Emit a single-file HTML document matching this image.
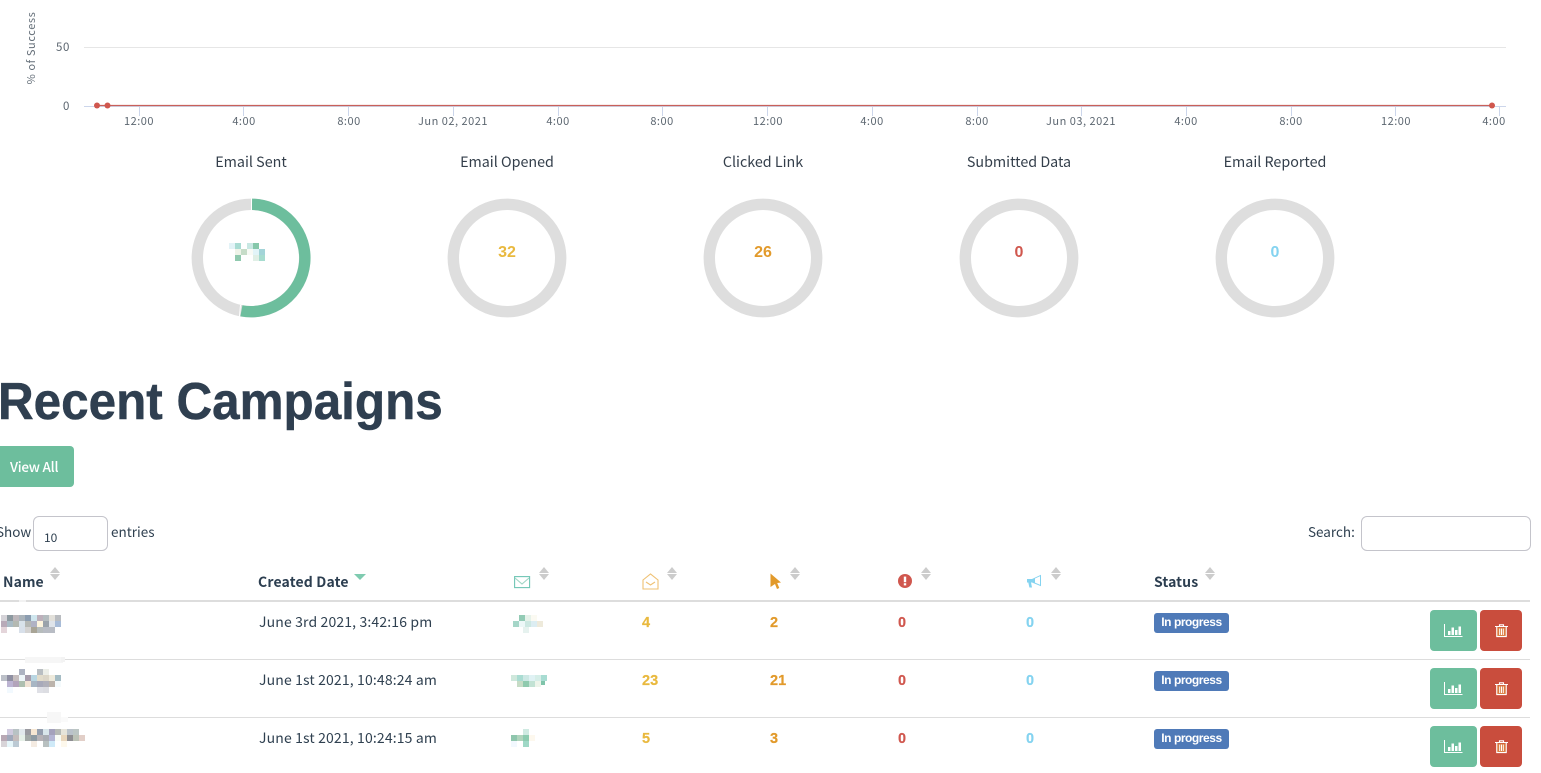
<!DOCTYPE html>
<html><head><meta charset="utf-8"><title>Dashboard</title>
<style>
html,body{margin:0;padding:0;background:#fff}
body{width:1541px;height:773px;position:relative;overflow:hidden;font-family:"Noto Sans CJK SC","Liberation Sans",sans-serif;color:#2c3e50}
.a{position:absolute;white-space:nowrap;line-height:20px}
.t{font-size:14px;letter-spacing:.14px;color:#2f4050}
.l{font-size:13.5px;letter-spacing:0;color:#2f4050}
.h{font-size:14px;font-weight:700;letter-spacing:.1px;color:#2c3e50}
.n{font-family:"Liberation Sans",sans-serif;font-weight:700;font-size:14.5px;margin-top:1px;-webkit-text-stroke:.2px currentColor}
.title{font-size:14.3px;color:#333e4a;text-align:center;width:200px}
.ctr{font-family:"Liberation Sans",sans-serif;font-weight:700;font-size:16px;text-align:center;width:60px}
.ax{font-size:11px;letter-spacing:.5px;color:#5c6670;text-align:center;width:90px;line-height:14px}
.badge{position:absolute;left:1154px;width:75px;height:20px;background:#4f7ab8;border-radius:3px;color:#fff;font:700 12px/18px "Liberation Sans",sans-serif;letter-spacing:-.45px;text-align:center}
.bg{position:absolute;left:1430px;width:47px;height:41px;background:#6dbe9d;border-radius:4px}
.br{position:absolute;left:1480px;width:42px;height:41px;background:#c94d3d;border-radius:4px}
.line{position:absolute;left:0;width:1530px;height:1px;background:#ddd}
svg{position:absolute;overflow:visible}
.s{position:absolute;width:11px;height:14px}
.s:before,.s:after{content:"";position:absolute;left:0;border-left:5.5px solid transparent;border-right:5.5px solid transparent}
.s:before{top:0;border-bottom:6px solid #ccc}
.s:after{top:7px;border-top:6px solid #ccc}
.box{position:absolute;box-sizing:border-box;border:1px solid #c4c4cb;border-radius:6px;background:#fff}
</style></head><body>

<svg style="left:0;top:0" width="1541" height="130">
<line x1="84" x2="1506" y1="47.5" y2="47.5" stroke="#e6e6e6"/>
<line x1="84" x2="1506" y1="106.5" y2="106.5" stroke="#ccd6eb"/>
<g stroke="#ccd6eb">
<path d="M139.5 106v10M243.5 106v10M348.5 106v10M453.5 106v10M558.5 106v10M662.5 106v10M767.5 106v10M872.5 106v10M977.5 106v10M1081.5 106v10M1186.5 106v10M1291.5 106v10M1395.5 106v10M1499.5 106v10"/>
</g>
<line x1="97" x2="1492" y1="105.5" y2="105.5" stroke="#c9605a" stroke-width="1.3"/>
<circle cx="97" cy="105.5" r="3" fill="#d0574e"/><circle cx="107.5" cy="105.5" r="3" fill="#d0574e"/><circle cx="1492" cy="105.5" r="3" fill="#d0574e"/>
</svg>
<div class="a" style="left:31px;top:48px;font-size:11px;letter-spacing:.6px;color:#66707a;line-height:14px;transform:translate(-50%,-50%) rotate(-90deg)">% of Success</div>
<div class="a" style="left:40px;top:40px;width:30px;text-align:right;font-size:11.5px;letter-spacing:.6px;color:#5c6670;line-height:14px">50</div>
<div class="a" style="left:40px;top:99px;width:30px;text-align:right;font-size:11.5px;letter-spacing:.6px;color:#5c6670;line-height:14px">0</div>
<div class="a ax" style="left:94px;top:114px">12:00</div>
<div class="a ax" style="left:199px;top:114px">4:00</div>
<div class="a ax" style="left:304px;top:114px">8:00</div>
<div class="a ax" style="left:408px;top:114px">Jun 02, 2021</div>
<div class="a ax" style="left:513px;top:114px">4:00</div>
<div class="a ax" style="left:617px;top:114px">8:00</div>
<div class="a ax" style="left:723px;top:114px">12:00</div>
<div class="a ax" style="left:827px;top:114px">4:00</div>
<div class="a ax" style="left:932px;top:114px">8:00</div>
<div class="a ax" style="left:1036px;top:114px">Jun 03, 2021</div>
<div class="a ax" style="left:1141px;top:114px">4:00</div>
<div class="a ax" style="left:1246px;top:114px">8:00</div>
<div class="a ax" style="left:1351px;top:114px">12:00</div>
<div class="a ax" style="left:1449px;top:114px">4:00</div>

<div class="a title" style="left:151px;top:152px">Email Sent</div>
<div class="a title" style="left:407px;top:152px">Email Opened</div>
<div class="a title" style="left:663px;top:152px">Clicked Link</div>
<div class="a title" style="left:919px;top:152px">Submitted Data</div>
<div class="a title" style="left:1175px;top:152px">Email Reported</div>

<svg style="left:0;top:0" width="1541" height="340" fill="none" stroke="#dedede" stroke-width="11.4">
<circle cx="251" cy="258" r="53.7"/>
<circle cx="507" cy="258" r="53.7"/>
<circle cx="763" cy="258" r="53.7"/>
<circle cx="1019" cy="258" r="53.7"/>
<circle cx="1275" cy="258" r="53.7"/>
<path d="M252 204.300 A53.700 53.700 0 1 1 241.400 310.800" stroke="#6dbe9d"/>
<path d="M251.500 197v13M240.500 305l-1.200 13" stroke="#fff" stroke-width="1"/>
</svg>
<div class="a ctr" style="left:477px;top:243px;color:#e9b93f">32</div>
<div class="a ctr" style="left:733px;top:243px;color:#e29a2b">26</div>
<div class="a ctr" style="left:989px;top:243px;color:#d0574e">0</div>
<div class="a ctr" style="left:1245px;top:243px;color:#84d3f0">0</div>
<svg style="left:0;top:0" width="100" height="100" shape-rendering="crispEdges">
<g transform="translate(229,243)">
<rect x="0" y="0" width="6" height="6" fill="#e3f3f7"/><rect x="6" y="0" width="6" height="6" fill="#a9dcd3"/><rect x="18" y="0" width="6" height="6" fill="#c8e8e3"/><rect x="24" y="0" width="6" height="6" fill="#86c8ab"/>
<rect x="6" y="6" width="6" height="6" fill="#eef3e8"/><rect x="12" y="6" width="6" height="6" fill="#c6dcc8"/><rect x="18" y="6" width="6" height="6" fill="#f8faf5"/><rect x="24" y="6" width="6" height="6" fill="#e2f4f8"/><rect x="30" y="6" width="6" height="6" fill="#a3d4d8"/>
<rect x="6" y="12" width="6" height="6" fill="#8fc9ae"/><rect x="24" y="12" width="6" height="6" fill="#e0efe6"/><rect x="30" y="12" width="6" height="6" fill="#a6dccf"/>
</g>
</svg>

<div class="a" style="left:-2px;top:372px;font:700 52px/60px 'Liberation Sans',sans-serif;color:#2f3f50;-webkit-text-stroke:.5px #2f3f50;transform:scaleX(.95);transform-origin:0 0">Recent Campaigns</div>
<div style="position:absolute;left:-6px;top:446px;width:80px;height:41px;background:#6dbe9d;border-radius:4px"></div>
<div class="a" style="left:10px;top:456px;font-size:13.500px;letter-spacing:-.25px;font-weight:500;color:#fff">View All</div>

<div class="a l" style="left:-4px;top:521px">Show</div>
<div class="box" style="left:33px;top:516px;width:75px;height:35px"></div>
<div class="a" style="left:44px;top:528px;font-size:12px;color:#2f4050">10</div>
<div class="a l" style="left:111px;top:521px">entries</div>
<div class="a l" style="left:1308px;top:521px">Search:</div>
<div class="box" style="left:1361px;top:516px;width:170px;height:35px"></div>

<div class="a h" style="left:3px;top:572px">Name</div><div class="s" style="left:50px;top:567px"></div>
<div class="a h" style="left:258px;top:572px;letter-spacing:.16px">Created Date</div>
<div style="position:absolute;left:354px;top:574px;border-left:6px solid transparent;border-right:6px solid transparent;border-top:6px solid #7fcbb0"></div>
<svg style="left:514px;top:575px" width="16" height="14" fill="none" stroke="#6fc6b4" stroke-width="1.1"><rect x=".6" y="1.6" width="15" height="11"/><path d="M1 3l7 6 7-6" stroke="#9fd5c5"/></svg>
<div class="s" style="left:539px;top:567px"></div>
<svg style="left:642px;top:573px" width="17" height="17" fill="none" stroke="#efc173" stroke-width="1.1"><path d="M1 7L8.500 1 16 7v9H1z"/><path d="M4 9l4.500 3L13 9"/></svg>
<div class="s" style="left:667px;top:567px"></div>
<svg style="left:770px;top:573px" width="12" height="17"><path d="M.5 .5L11 9.500 7.200 10 9.300 15 7 16 5 11 .5 14z" fill="#e29a2b"/></svg>
<div class="s" style="left:790px;top:567px"></div>
<svg style="left:898px;top:574px" width="14" height="14"><circle cx="7" cy="7" r="7" fill="#d0574e"/><rect x="5.800" y="2.600" width="2.400" height="5.600" fill="#fff"/><rect x="5.800" y="9.200" width="2.400" height="2.200" fill="#fff"/></svg>
<div class="s" style="left:921px;top:567px"></div>
<svg style="left:1026px;top:574px" width="17" height="15"><path d="M1 5h5L15 .8v11.400L6 8.500H5l1 5H3.400L2.300 8.500H1z" fill="#84d3f0"/><path d="M9 4.500L14 2.300v8.400L9 8.600z" fill="#fff"/></svg>
<div class="s" style="left:1051px;top:567px"></div>
<div class="a h" style="left:1154px;top:572px">Status</div><div class="s" style="left:1205px;top:567px"></div>

<div class="line" style="top:600px;height:2px"></div>
<div class="line" style="top:659px"></div>
<div class="line" style="top:717px"></div>

<div class="a t" style="left:259px;top:612px">June 3rd 2021, 3:42:16 pm</div>
<div class="a t" style="left:259px;top:670px">June 1st 2021, 10:48:24 am</div>
<div class="a t" style="left:259px;top:728px">June 1st 2021, 10:24:15 am</div>

<div class="a n" style="left:642px;top:612px;color:#e9b93f">4</div>
<div class="a n" style="left:642px;top:670px;color:#e9b93f">23</div>
<div class="a n" style="left:642px;top:728px;color:#e9b93f">5</div>
<div class="a n" style="left:770px;top:612px;color:#e29a2b">2</div>
<div class="a n" style="left:770px;top:670px;color:#e29a2b">21</div>
<div class="a n" style="left:770px;top:728px;color:#e29a2b">3</div>
<div class="a n" style="left:898px;top:612px;color:#d0574e">0</div>
<div class="a n" style="left:898px;top:670px;color:#d0574e">0</div>
<div class="a n" style="left:898px;top:728px;color:#d0574e">0</div>
<div class="a n" style="left:1026px;top:612px;color:#84d3f0">0</div>
<div class="a n" style="left:1026px;top:670px;color:#84d3f0">0</div>
<div class="a n" style="left:1026px;top:728px;color:#84d3f0">0</div>

<div class="badge" style="top:613px">In progress</div>
<div class="badge" style="top:671px">In progress</div>
<div class="badge" style="top:729px">In progress</div>

<div class="bg" style="top:610px"></div><div class="br" style="top:610px"></div>
<div class="bg" style="top:668px"></div><div class="br" style="top:668px"></div>
<div class="bg" style="top:726px"></div><div class="br" style="top:726px"></div>

<svg style="left:0;top:0" width="1541" height="773">
<defs>
<g id="chart"><path d="M.5 0v12.500h18" fill="none" stroke="#fff" stroke-width="1"/><path d="M4 7h2.500v4H4zM7.500 3.500H10v7.500H7.500zM11 6h2.500v5H11zM14.500 2.500H17V11h-2.500z" fill="#fff"/></g>
<g id="trash" fill="none" stroke="#fff"><path d="M0 2.500h13M4.500 2.500V.8h4v1.700" stroke-width="1.100"/><path d="M1.800 3v9.500h9.400V3" stroke-width="1.200"/><path d="M2.300 3.500h8.400v8.500H2.300z" fill="#e8a040" stroke="none" opacity=".55"/><path d="M4.700 4.500v6.500M6.500 4.500v6.500M8.300 4.500v6.500" stroke-width="1"/></g>
</defs>
<use href="#chart" x="1444" y="624"/><use href="#trash" x="1495" y="624"/>
<use href="#chart" x="1444" y="682"/><use href="#trash" x="1495" y="682"/>
<use href="#chart" x="1444" y="740"/><use href="#trash" x="1495" y="740"/>
</svg>

<svg style="left:0;top:0" width="1541" height="773" shape-rendering="crispEdges">
<!-- row 1 name -->
<g transform="translate(1,615)">
<rect x="0" y="0" width="6" height="6" fill="#d5d3d8"/><rect x="6" y="0" width="6" height="6" fill="#8d99a0"/><rect x="12" y="0" width="6" height="6" fill="#bdb7bb"/><rect x="18" y="0" width="6" height="6" fill="#aab3ba"/><rect x="24" y="0" width="6" height="6" fill="#8c9db0"/><rect x="30" y="0" width="6" height="6" fill="#cfe6ee"/><rect x="36" y="0" width="6" height="6" fill="#bdb0bb"/><rect x="42" y="0" width="6" height="6" fill="#b4bcbf"/><rect x="48" y="0" width="6" height="6" fill="#e2e0da"/><rect x="54" y="0" width="6" height="6" fill="#b9bcc0"/>
<rect x="0" y="6" width="6" height="6" fill="#b8aab8"/><rect x="6" y="6" width="6" height="6" fill="#a9bbc5"/><rect x="12" y="6" width="6" height="6" fill="#b4b9b2"/><rect x="18" y="6" width="6" height="6" fill="#d8e2ea"/><rect x="24" y="6" width="6" height="6" fill="#b5b8b5"/><rect x="30" y="6" width="6" height="6" fill="#b0b2c4"/><rect x="36" y="6" width="6" height="6" fill="#fdf4dd"/><rect x="42" y="6" width="6" height="6" fill="#9aa2aa"/><rect x="48" y="6" width="6" height="6" fill="#dfe4ea"/><rect x="54" y="6" width="6" height="6" fill="#a8bcd8"/>
<rect x="0" y="12" width="6" height="6" fill="#e4d5da"/><rect x="18" y="12" width="6" height="6" fill="#d8e0ea"/><rect x="24" y="12" width="6" height="6" fill="#d4d3d2"/><rect x="30" y="12" width="6" height="6" fill="#a8a496"/><rect x="36" y="12" width="6" height="6" fill="#b6bcbc"/><rect x="42" y="12" width="6" height="6" fill="#b8bcc4"/><rect x="48" y="12" width="6" height="6" fill="#b8bcc4"/>
</g>
<rect x="19" y="600" width="7" height="2" fill="#f2f2f2"/>
<!-- row 2 name -->
<rect x="25" y="657" width="38" height="6" fill="#f6f6f6"/><rect x="61" y="657" width="4" height="5" fill="#f3f3f3"/>
<g transform="translate(1,669)">
<rect x="18" y="0" width="6" height="6" fill="#adb3c2"/><rect x="36" y="0" width="6" height="6" fill="#b9bec2"/><rect x="42" y="0" width="6" height="6" fill="#eceee8"/>
<rect x="0" y="6" width="6" height="6" fill="#bcc0c8"/><rect x="6" y="6" width="6" height="6" fill="#8f8fa2"/><rect x="12" y="6" width="6" height="6" fill="#c5bdbe"/><rect x="18" y="6" width="6" height="6" fill="#eef6fa"/><rect x="24" y="6" width="6" height="6" fill="#a69cac"/><rect x="30" y="6" width="6" height="6" fill="#b9d6e2"/><rect x="36" y="6" width="6" height="6" fill="#e2dccb"/><rect x="42" y="6" width="6" height="6" fill="#dcd6c8"/><rect x="48" y="6" width="6" height="6" fill="#eeeadc"/><rect x="54" y="6" width="6" height="6" fill="#a5bcc4"/>
<rect x="6" y="12" width="6" height="6" fill="#bcb4d2"/><rect x="12" y="12" width="6" height="6" fill="#b2a4ba"/><rect x="18" y="12" width="6" height="6" fill="#aebfb0"/><rect x="24" y="12" width="6" height="6" fill="#f0e2d4"/><rect x="30" y="12" width="6" height="6" fill="#a8b6c4"/><rect x="36" y="12" width="6" height="6" fill="#a8aaba"/><rect x="42" y="12" width="6" height="6" fill="#b0b0ba"/><rect x="48" y="12" width="6" height="6" fill="#bcb4ac"/><rect x="54" y="12" width="6" height="6" fill="#f4fafc"/>
<rect x="6" y="18" width="6" height="6" fill="#f2f9fe"/><rect x="36" y="18" width="6" height="6" fill="#dfe0e6"/><rect x="42" y="18" width="6" height="6" fill="#dcdde2"/>
</g>
<!-- row 3 name -->
<rect x="47" y="712" width="14" height="11" fill="#f7f7f7"/><rect x="61" y="717" width="7" height="5" fill="#fafafa"/>
<g transform="translate(1,729)">
<rect x="6" y="0" width="6" height="6" fill="#d0cade"/><rect x="12" y="0" width="6" height="6" fill="#b8c2c4"/><rect x="18" y="0" width="6" height="6" fill="#e2e8ec"/><rect x="24" y="0" width="6" height="6" fill="#9a9aa0"/><rect x="30" y="0" width="6" height="6" fill="#f6e6d2"/><rect x="36" y="0" width="6" height="6" fill="#949eae"/><rect x="42" y="0" width="6" height="6" fill="#d8e6ea"/><rect x="48" y="0" width="6" height="6" fill="#a4a2bc"/><rect x="54" y="0" width="6" height="6" fill="#b6bab6"/><rect x="60" y="0" width="6" height="6" fill="#e6e4da"/><rect x="66" y="0" width="6" height="6" fill="#bac2ca"/><rect x="72" y="0" width="6" height="6" fill="#bcc6c4"/>
<rect x="0" y="6" width="6" height="6" fill="#b8a8b4"/><rect x="6" y="6" width="6" height="6" fill="#a0a8ba"/><rect x="12" y="6" width="6" height="6" fill="#c4bcbc"/><rect x="18" y="6" width="6" height="6" fill="#e6f0e8"/><rect x="24" y="6" width="6" height="6" fill="#a2a8a6"/><rect x="30" y="6" width="6" height="6" fill="#8e9aa2"/><rect x="36" y="6" width="6" height="6" fill="#b6b2b6"/><rect x="42" y="6" width="6" height="6" fill="#a8acb2"/><rect x="48" y="6" width="6" height="6" fill="#b4b6d4"/><rect x="54" y="6" width="6" height="6" fill="#f8fcf6"/><rect x="60" y="6" width="6" height="6" fill="#e8d6bc"/><rect x="66" y="6" width="6" height="6" fill="#8e8e92"/><rect x="72" y="6" width="6" height="6" fill="#bcc2b6"/><rect x="78" y="6" width="6" height="6" fill="#e2cfc8"/>
<rect x="0" y="12" width="6" height="6" fill="#d8d4d8"/><rect x="6" y="12" width="6" height="6" fill="#e6f6fa"/><rect x="12" y="12" width="6" height="6" fill="#bccad4"/><rect x="30" y="12" width="6" height="6" fill="#f4ebe2"/><rect x="42" y="12" width="6" height="6" fill="#b8c0c0"/><rect x="48" y="12" width="6" height="6" fill="#cfeaf8"/><rect x="60" y="12" width="6" height="6" fill="#fdf8ec"/>
</g>
<!-- row sent values -->
<g transform="translate(513,615)">
<rect x="6" y="0" width="6" height="6" fill="#93cbb5"/><rect x="12" y="0" width="6" height="6" fill="#e6f2ea"/><rect x="18" y="0" width="6" height="6" fill="#fbfaf2"/>
<rect x="0" y="6" width="6" height="6" fill="#a5d6c8"/><rect x="6" y="6" width="6" height="6" fill="#edf8f8"/><rect x="12" y="6" width="6" height="6" fill="#cde8e2"/><rect x="18" y="6" width="6" height="6" fill="#dcedf2"/><rect x="24" y="6" width="6" height="6" fill="#eeeadb"/>
<rect x="10" y="12" width="6" height="6" fill="#e6f2ef"/>
</g>
<g transform="translate(511,675)">
<rect x="0" y="0" width="6" height="6" fill="#cfe8dc"/><rect x="6" y="0" width="6" height="6" fill="#aadcd2"/><rect x="12" y="0" width="6" height="6" fill="#cde8e4"/><rect x="18" y="0" width="6" height="6" fill="#e0f2f4"/><rect x="24" y="0" width="6" height="6" fill="#d6eee8"/><rect x="30" y="0" width="6" height="6" fill="#a8dcd2"/>
<rect x="6" y="6" width="6" height="6" fill="#c6dcc6"/><rect x="12" y="6" width="6" height="6" fill="#8fcaae"/><rect x="18" y="6" width="6" height="6" fill="#c2e2d4"/><rect x="24" y="6" width="6" height="6" fill="#edf4ea"/><rect x="30" y="6" width="4" height="4" fill="#7fc4aa"/>
</g>
<g transform="translate(511,729)">
<rect x="12" y="0" width="6" height="6" fill="#cfeae2"/>
<rect x="0" y="6" width="6" height="6" fill="#8fc6ad"/><rect x="6" y="6" width="6" height="6" fill="#b0d4bd"/><rect x="12" y="6" width="6" height="6" fill="#8ccbb0"/><rect x="18" y="6" width="6" height="6" fill="#fdf8ee"/>
<rect x="0" y="12" width="6" height="6" fill="#f2f8fe"/><rect x="12" y="12" width="6" height="6" fill="#9fd8c6"/>
</g>
</svg>
</body></html>
